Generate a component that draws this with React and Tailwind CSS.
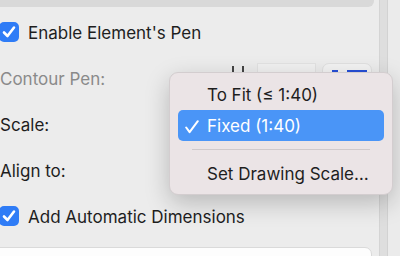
import React from "react";

const font = { fontFamily: "Inter, 'Noto Sans', 'Liberation Sans', sans-serif" };

function Check() {
  return (
    <div className="w-[20px] h-[20px] ml-[-1px] rounded-[5px] bg-[#2f7cf6] flex items-center justify-center shrink-0">
      <svg width="20" height="20" viewBox="0 0 20 20">
        <path d="M5 10.5 L8.5 14 L15 5.5" fill="none" stroke="white" strokeWidth="2.6" strokeLinecap="round" strokeLinejoin="round" />
      </svg>
    </div>
  );
}

export default function App() {
  return (
    <div className="w-[400px] h-[256px] bg-[#ececec] relative overflow-hidden flex text-[17px] text-[#1e1e1e]" style={font}>
      <div className="w-[379px] flex flex-col shrink-0">
        <div className="h-[7px] w-[374px] bg-[#d9d9d9] rounded-br-[6px] shrink-0" />
        <div className="h-[2px] shrink-0" />
        <div className="h-[46px] flex items-center shrink-0">
          <Check />
          <span className="ml-[9px] pt-[3px]">Enable Element's Pen</span>
        </div>
        <div className="h-[46px] flex shrink-0">
          <span className="w-[232px] self-center pt-[3px] text-[#8a8a8a]">Contour Pen:</span>
          <div className="w-[2px] h-[20px] mt-[11px] bg-[#444]" />
          <div className="w-[8px]" />
          <div className="w-[2px] h-[20px] mt-[11px] bg-[#444]" />
          <div className="w-[13px]" />
          <div className="w-[59px] h-[30px] mt-[8px] bg-[#f1f1f1] border border-[#e2e2e2]" />
          <div className="w-[6px]" />
          <div className="w-[50px] h-[30px] mt-[8px] bg-[#f3f3f3] rounded-[7px] border border-[#e0e0e0] flex pt-[6px] pl-[9px] gap-[9px]">
            <div className="w-[6px] h-[3px] bg-[#2750d8]" />
            <div className="w-[20px] h-[3px] bg-[#2750d8]" />
          </div>
        </div>
        <div className="h-[46px] flex items-center shrink-0">
          <span className="pt-[3px]">Scale:</span>
        </div>
        <div className="h-[46px] flex items-center shrink-0">
          <span className="pt-[3px]">Align to:</span>
        </div>
        <div className="h-[46px] flex items-center shrink-0">
          <Check />
          <span className="ml-[9px] pt-[3px]">Add Automatic Dimensions</span>
        </div>
        <div className="h-[8px] shrink-0" />
        <div className="h-[20px] w-[373px] ml-[-1px] bg-[#fdfdfd] border border-[#dadada] rounded-tr-[7px] shrink-0" />
      </div>
      <div className="w-[1px] bg-[#d4d4d4]" />
      <div className="w-[7px] bg-[#dedede]" />
      <div className="w-[1px] bg-[#d2d2d2]" />
      <div className="flex-1 bg-[#ebebeb]" />

      <div className="absolute left-[169px] top-[72px] w-[224px] h-[123px] rounded-[9px] bg-[#ebe4e6] border border-[#d3cdcf] shadow-[0_8px_24px_rgba(0,0,0,0.22)] pt-[6px] px-[8px] flex flex-col">
        <div className="h-[31px] flex items-center pl-[29px] pt-[3px] shrink-0">To Fit (≤ 1:40)</div>
        <div className="h-[31px] flex items-center pl-[29px] pt-[3px] rounded-[5px] bg-[#4a95f7] text-white relative shrink-0">
          <svg className="absolute left-[7px] top-[10px]" width="14" height="14" viewBox="0 0 14 14">
            <path d="M1.2 7.5 L4.6 12.2 L12.8 1.2" fill="none" stroke="white" strokeWidth="2" strokeLinecap="round" strokeLinejoin="round" />
          </svg>
          Fixed (1:40)
        </div>
        <div className="h-[17px] flex items-center px-[14px] shrink-0">
          <div className="h-[1px] w-full bg-[#cfc9cb]" />
        </div>
        <div className="h-[31px] flex items-center pl-[29px] pt-[3px] shrink-0">Set Drawing Scale…</div>
      </div>
    </div>
  );
}
